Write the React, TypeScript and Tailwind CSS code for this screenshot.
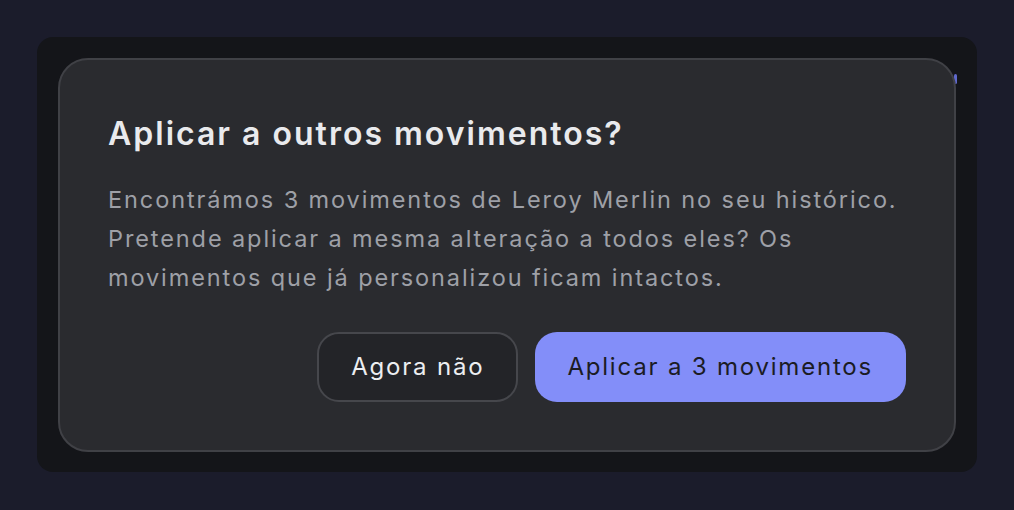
import React from 'react';

export default function App() {
  return (
    <div
      className="min-h-screen w-full bg-[#1b1c2b] p-[37px]"
      style={{ fontFamily: 'Inter, "Noto Sans", sans-serif' }}
    >
      <div className="relative rounded-2xl bg-[#141519] p-[21px] pb-[20px]">
        {/* sliver of the card behind the dialog */}
        <div className="absolute right-[20px] top-[37px] h-[10px] w-[3px] rounded-full bg-[#5f68cc]" />
        <div className="relative rounded-[30px] border-2 border-[#404146] bg-[#2a2b2f] px-12 pb-12 pt-[54px]">
          <h2 className="text-[32px] font-semibold leading-[40px] tracking-[2px] text-[#e9eaed]">
            Aplicar a outros movimentos?
          </h2>
          <p className="mt-[26px] text-[23.5px] leading-[39px] tracking-[1.9px] text-[#9ea0a7]">
            Encontrámos 3 movimentos de Leroy Merlin no seu histórico.
            <br />
            Pretende aplicar a mesma alteração a todos eles? Os
            <br />
            movimentos que já personalizou ficam intactos.
          </p>
          <div className="mt-[35px] flex justify-end gap-[17px]">
            <button className="h-[70px] rounded-[22px] border-2 border-[#46474c] bg-[#232428] px-[32px] text-[24px] font-normal tracking-[1.8px] text-[#eceef1]">
              Agora não
            </button>
            <button className="h-[70px] rounded-[22px] bg-[#838ef9] pl-[32px] pr-[33px] text-[24px] font-normal tracking-[1.8px] text-[#1b1c24]">
              Aplicar a 3 movimentos
            </button>
          </div>
        </div>
      </div>
    </div>
  );
}
